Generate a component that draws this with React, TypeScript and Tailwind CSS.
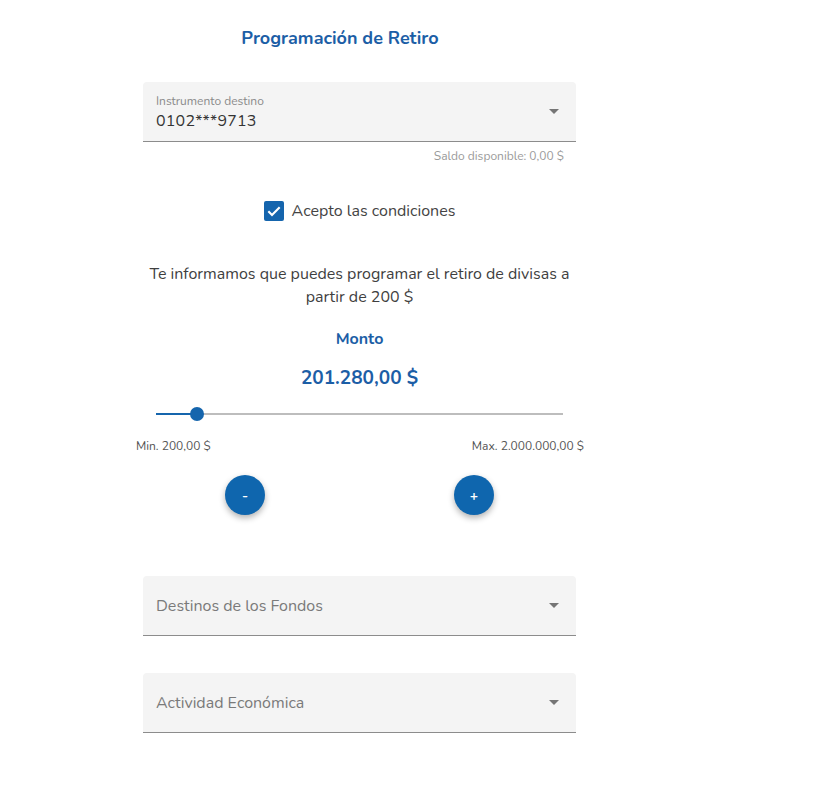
import React from "react";

const font = { fontFamily: '"Nunito", "Lato", "Noto Sans", sans-serif' };

function Arrow() {
  return (
    <svg width="10" height="5" viewBox="0 0 10 5" className="shrink-0">
      <path d="M0 0 L5 5 L10 0 Z" fill="#757575" />
    </svg>
  );
}

function SelectField({ label, value }: { label: string; value?: string }) {
  return (
    <div className="h-[60px] w-full bg-[#f4f4f4] rounded-t-[4px] border-b border-[#8c8c8c] flex items-center pl-[13px] pr-[17px]">
      <div className="flex-1 flex flex-col">
        {value ? (
          <>
            <span className="text-[12px] leading-[14px] text-[#8a8a8a] mt-[1px]">{label}</span>
            <span className="text-[16px] leading-[20px] text-[#333] mt-[3px] tracking-[0.2px]">{value}</span>
          </>
        ) : (
          <span className="text-[16px] leading-[20px] text-[#7a7a7a] mt-[1px]">{label}</span>
        )}
      </div>
      <Arrow />
    </div>
  );
}

export default function App() {
  const pct = (201280 - 200) / (2000000 - 200);
  return (
    <div className="w-[814px] h-[794px] bg-white" style={font}>
      <div className="ml-[143px] w-[433px] flex flex-col">
        <h1 className="mt-[26px] pr-[39px] text-center text-[18px] leading-[24px] font-bold text-[#1c5ea6]">
          Programación de Retiro
        </h1>

        <div className="mt-[32px]">
          <SelectField label="Instrumento destino" value="0102***9713" />
        </div>
        <div className="mt-[7px] pr-[12px] text-right text-[12px] leading-[14px] text-[#9a9a9a]">
          Saldo disponible: 0,00 $
        </div>

        <div className="mt-[38px] flex items-center justify-center gap-[8px]">
          <div className="w-[20px] h-[20px] rounded-[2px] bg-[#1565ad] flex items-center justify-center">
            <svg width="16" height="16" viewBox="0 0 24 24">
              <path d="M3.5 12.5 L9 18 L20.5 6.5" fill="none" stroke="white" strokeWidth="3.2" />
            </svg>
          </div>
          <span className="text-[16px] leading-[20px] text-[#444]">Acepto las condiciones</span>
        </div>

        <p className="mt-[42px] px-[4px] text-center text-[16px] leading-[23px] text-[#3f3f3f]">
          Te informamos que puedes programar el retiro de divisas a partir de 200 $
        </p>

        <div className="mt-[20px] text-center text-[16px] leading-[20px] font-bold text-[#1c5ea6]">Monto</div>
        <div className="mt-[17px] text-center text-[19px] leading-[24px] font-bold text-[#1c5ea6]">
          201.280,00 $
        </div>

        <div className="mt-[17px] mx-[13px] h-[14px] relative flex items-center">
          <div className="absolute left-0 right-0 h-[2px] bg-[#bdbdbd]" />
          <div className="absolute left-0 h-[2px] bg-[#1565ad]" style={{ width: `${pct * 100}%` }} />
          <div
            className="absolute w-[14px] h-[14px] rounded-full bg-[#1565ad] -translate-x-1/2"
            style={{ left: `${pct * 100}%` }}
          />
        </div>

        <div className="mt-[18px] -ml-[7px] -mr-[8px] flex justify-between text-[12px] leading-[14px] text-[#555]">
          <span>Min. 200,00 $</span>
          <span>Max. 2.000.000,00 $</span>
        </div>

        <div className="mt-[22px] flex">
          <button className="ml-[82px] w-[40px] h-[40px] rounded-full bg-[#0f66ae] text-white text-[14px] font-bold flex items-center justify-center shadow-[0_3px_6px_rgba(0,0,0,0.3)]">
            -
          </button>
          <button className="ml-[189px] w-[40px] h-[40px] rounded-full bg-[#0f66ae] text-white text-[14px] font-bold flex items-center justify-center shadow-[0_3px_6px_rgba(0,0,0,0.3)]">
            +
          </button>
        </div>

        <div className="mt-[61px]">
          <SelectField label="Destinos de los Fondos" />
        </div>
        <div className="mt-[37px]">
          <SelectField label="Actividad Económica" />
        </div>
      </div>
    </div>
  );
}
